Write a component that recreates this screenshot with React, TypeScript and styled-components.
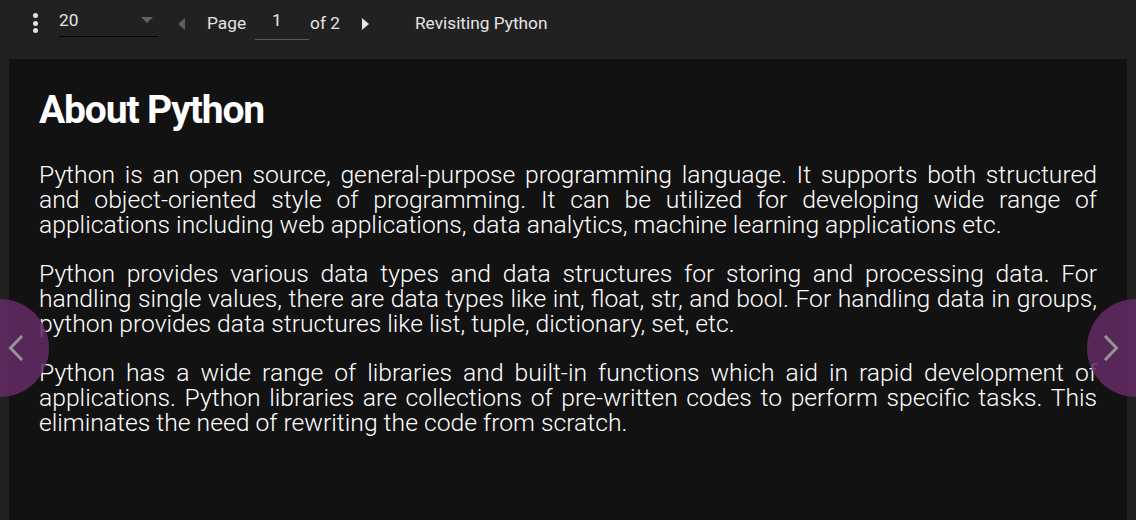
import React from "react";
import styled, { createGlobalStyle } from "styled-components";

const Global = createGlobalStyle`
	html, body {
		margin: 0;
		padding: 0;
		background: #212121;
		font-family: Roboto, "Noto Sans", sans-serif;
		overflow: hidden;
	}
`;

const Page = styled.div`
	width: 1136px;
	height: 520px;
	display: flex;
	flex-direction: column;
	background: #212121;
	position: relative;
	overflow: hidden;
`;

const Toolbar = styled.div`
	height: 59px;
	display: flex;
	align-items: flex-start;
	padding-left: 27px;
	box-sizing: border-box;
	color: #e4e4e4;
	font-size: 17.3px;
	line-height: 20px;
`;

const MenuButton = styled.div`
	width: 16px;
	height: 20px;
	margin-top: 13px;
	display: flex;
	flex-direction: column;
	align-items: center;
	justify-content: space-between;
	span {
		width: 5px;
		height: 5px;
		border-radius: 50%;
		background: #e4e4e4;
	}
`;

const Select = styled.div`
	margin-left: 16px;
	margin-top: 10px;
	width: 99px;
	height: 27px;
	border-bottom: 1px solid #000;
	display: flex;
	justify-content: space-between;
	align-items: flex-start;
	box-sizing: border-box;
`;

const Caret = styled.div`
	width: 0;
	height: 0;
	margin-top: 7px;
	margin-right: 5px;
	border-left: 6px solid transparent;
	border-right: 6px solid transparent;
	border-top: 6px solid #626262;
`;

const ArrowBox = styled.div<{ $ml: number }>`
	margin-left: ${(p) => p.$ml}px;
	margin-top: 18px;
`;

const Arrow = styled.div<{ $dir: "left" | "right"; $disabled?: boolean }>`
	width: 0;
	height: 0;
	border-top: 6px solid transparent;
	border-bottom: 6px solid transparent;
	${(p) =>
		p.$dir === "left"
			? `border-right: 7px solid ${p.$disabled ? "#5e5e5e" : "#e4e4e4"};`
			: `border-left: 7px solid ${p.$disabled ? "#5e5e5e" : "#e4e4e4"};`}
`;

const Label = styled.span<{ $ml: number }>`
	margin-left: ${(p) => p.$ml}px;
	margin-top: 13px;
`;

const PageInput = styled.div`
	margin-left: 9px;
	margin-top: 10px;
	width: 54px;
	height: 30px;
	padding-left: 17px;
	border-bottom: 1px solid #5a5a5a;
	box-sizing: border-box;
`;

const Viewer = styled.div`
	flex: 1;
	margin: 0 9px;
	background: #121212;
	padding: 27px 30px 0;
	color: #fff;
`;

const Heading = styled.h1`
	margin: 0 0 28px;
	font-size: 39px;
	font-weight: 700;
	line-height: 48px;
	letter-spacing: -1.15px;
`;

const Para = styled.p`
	margin: 24px 0 0;
	font-size: 24.7px;
	font-weight: 300;
	line-height: 25px;
	text-align: justify;
	color: #fff;
`;

const NavButton = styled.div<{ $side: "left" | "right" }>`
	position: absolute;
	top: 299px;
	${(p) => p.$side}: -49px;
	width: 98px;
	height: 98px;
	border-radius: 50%;
	background: rgba(100, 44, 102, 0.85);
	display: flex;
	align-items: center;
	justify-content: ${(p) => (p.$side === "left" ? "flex-end" : "flex-start")};
	${(p) => (p.$side === "left" ? "padding-right: 25px;" : "padding-left: 16px;")}
	box-sizing: border-box;
	svg {
		display: block;
	}
`;

const Chevron = ({ dir }: { dir: "left" | "right" }) => (
	<svg width="16" height="26" viewBox="0 0 16 26">
		<path
			d={dir === "left" ? "M14 1 L2.5 13 L14 25" : "M2 1 L13.5 13 L2 25"}
			fill="none"
			stroke="#949494"
			strokeWidth="3"
		/>
	</svg>
);

export default function App() {
	return (
		<Page>
			<Global />
			<Toolbar>
				<MenuButton>
					<span />
					<span />
					<span />
				</MenuButton>
				<Select>
					<span>20</span>
					<Caret />
				</Select>
				<ArrowBox $ml={20}>
					<Arrow $dir="left" $disabled />
				</ArrowBox>
				<Label $ml={22}>Page</Label>
				<PageInput>1</PageInput>
				<Label $ml={1}>of 2</Label>
				<ArrowBox $ml={22}>
					<Arrow $dir="right" />
				</ArrowBox>
				<Label $ml={46}>Revisiting Python</Label>
			</Toolbar>
			<Viewer>
				<Heading>About Python</Heading>
				<Para>
					Python is an open source, general-purpose programming language. It
					supports both structured and object-oriented style of programming. It
					can be utilized for developing wide range of applications including
					web applications, data analytics, machine learning applications etc.
				</Para>
				<Para>
					Python provides various data types and data structures for storing
					and processing data. For handling single values, there are data types
					like int, float, str, and bool. For handling data in groups, python
					provides data structures like list, tuple, dictionary, set, etc.
				</Para>
				<Para>
					Python has a wide range of libraries and built-in functions which aid
					in rapid development of applications. Python libraries are
					collections of pre-written codes to perform specific tasks. This
					eliminates the need of rewriting the code from scratch.
				</Para>
			</Viewer>
			<NavButton $side="left">
				<Chevron dir="left" />
			</NavButton>
			<NavButton $side="right">
				<Chevron dir="right" />
			</NavButton>
		</Page>
	);
}
